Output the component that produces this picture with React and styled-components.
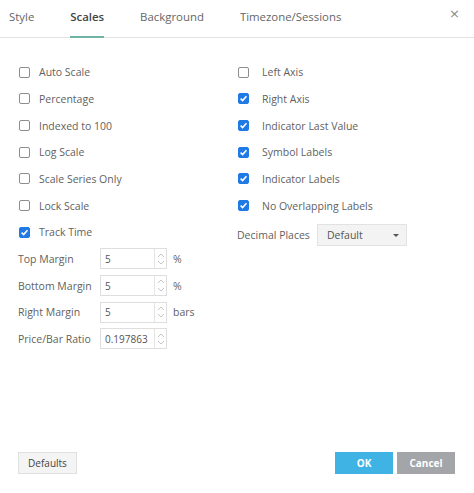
import React from "react";
import styled, { createGlobalStyle } from "styled-components";

const Global = createGlobalStyle`
  html, body { margin: 0; padding: 0; background: #fff; }
  body { font-family: "Open Sans", "Liberation Sans", sans-serif; color: #5f5f5f; }
`;

const leftItems = [
  { label: "Auto Scale", checked: false },
  { label: "Percentage", checked: false },
  { label: "Indexed to 100", checked: false },
  { label: "Log Scale", checked: false },
  { label: "Scale Series Only", checked: false },
  { label: "Lock Scale", checked: false },
  { label: "Track Time", checked: true },
];

const rightItems = [
  { label: "Left Axis", checked: false },
  { label: "Right Axis", checked: true },
  { label: "Indicator Last Value", checked: true },
  { label: "Symbol Labels", checked: true },
  { label: "Indicator Labels", checked: true },
  { label: "No Overlapping Labels", checked: true },
];

const margins = [
  { label: "Top Margin", value: "5", unit: "%" },
  { label: "Bottom Margin", value: "5", unit: "%" },
  { label: "Right Margin", value: "5", unit: "bars" },
  { label: "Price/Bar Ratio", value: "0.197863", unit: "" },
];

function Checkbox({ checked, gap }) {
  return (
    <Box $checked={checked} $gap={gap}>
      {checked && (
        <svg width="9" height="9" viewBox="0 0 10 10">
          <path d="M1.8 5.2 L4 7.3 L8.3 2.5" fill="none" stroke="#fff" strokeWidth="1.8" />
        </svg>
      )}
    </Box>
  );
}

function Spinner() {
  return (
    <Spin>
      <svg width="8" height="5" viewBox="0 0 8 5">
        <path d="M1 4 L4 1 L7 4" fill="none" stroke="#c4c4c4" strokeWidth="1" />
      </svg>
      <svg width="8" height="5" viewBox="0 0 8 5">
        <path d="M1 1 L4 4 L7 1" fill="none" stroke="#c4c4c4" strokeWidth="1" />
      </svg>
    </Spin>
  );
}

export default function App() {
  return (
    <Dialog>
      <Global />
      <Header>
        <Tab>Style</Tab>
        <Tab $active>Scales</Tab>
        <Tab>Background</Tab>
        <Tab>Timezone/Sessions</Tab>
        <Close>×</Close>
      </Header>
      <Body>
        <Column $width="219px">
          {leftItems.map((item) => (
            <Row key={item.label}>
              <Checkbox checked={item.checked} gap="9px" />
              <Label>{item.label}</Label>
            </Row>
          ))}
          {margins.map((m) => (
            <Row key={m.label}>
              <FieldLabel>{m.label}</FieldLabel>
              <Field>
                <Input>{m.value}</Input>
                <Spinner />
              </Field>
              <Unit>{m.unit}</Unit>
            </Row>
          ))}
        </Column>
        <Column>
          {rightItems.map((item) => (
            <Row key={item.label}>
              <Checkbox checked={item.checked} gap="13px" />
              <Label>{item.label}</Label>
            </Row>
          ))}
          <Row $offset="3px">
            <FieldLabel $width="80px">Decimal Places</FieldLabel>
            <Select>
              Default
              <Caret />
            </Select>
          </Row>
        </Column>
      </Body>
      <Footer>
        <Button>Defaults</Button>
        <Spacer />
        <Button $variant="primary">OK</Button>
        <Button $variant="cancel">Cancel</Button>
      </Footer>
    </Dialog>
  );
}

const Dialog = styled.div`
  width: 474px;
  height: 493px;
  display: flex;
  flex-direction: column;
  box-sizing: border-box;
`;

const Header = styled.div`
  height: 38px;
  box-sizing: border-box;
  border-bottom: 1px solid #e3e3e3;
  display: flex;
  align-items: stretch;
  gap: 36px;
  padding: 0 0 0 9px;
  position: relative;
`;

const Tab = styled.div`
  display: flex;
  align-items: center;
  font-size: 11.4px;
  color: ${(p) => (p.$active ? "#444" : "#666")};
  font-weight: ${(p) => (p.$active ? 600 : 400)};
  padding-bottom: 3px;
  box-sizing: border-box;
  border-bottom: 2px solid ${(p) => (p.$active ? "#6fb5a5" : "transparent")};
  margin-bottom: -1px;
`;

const Close = styled.div`
  position: absolute;
  right: 14px;
  top: 6px;
  font-size: 13px;
  color: #8a8a8a;
  font-family: "DejaVu Sans", sans-serif;
`;

const Body = styled.div`
  flex: 1;
  display: flex;
  padding: 21px 18px 0;
`;

const Column = styled.div`
  width: ${(p) => p.$width || "auto"};
  display: flex;
  flex-direction: column;
`;

const Row = styled.div`
  height: 26.67px;
  margin-top: ${(p) => p.$offset || "0"};
  display: flex;
  align-items: center;
`;

const Box = styled.div`
  width: 11px;
  height: 11px;
  flex-shrink: 0;
  box-sizing: border-box;
  border-radius: 2px;
  border: 1px solid ${(p) => (p.$checked ? "#1f7ae6" : "#8d8d8d")};
  background: ${(p) => (p.$checked ? "#1f7ae6" : "#fff")};
  display: flex;
  align-items: center;
  justify-content: center;
  margin-right: ${(p) => p.$gap};
  margin-left: 1px;
`;

const Label = styled.span`
  font-size: 10.5px;
  color: #5f5f5f;
`;

const FieldLabel = styled.span`
  font-size: 10.5px;
  color: #5f5f5f;
  width: ${(p) => p.$width || "82px"};
`;

const Field = styled.div`
  display: flex;
  width: 67px;
  height: 21px;
  box-sizing: border-box;
  border: 1px solid #dedede;
`;

const Input = styled.div`
  flex: 1;
  font-size: 10px;
  color: #555;
  padding-left: 4px;
  display: flex;
  align-items: center;
`;

const Spin = styled.div`
  width: 11px;
  border-left: 1px solid #e6e6e6;
  display: flex;
  flex-direction: column;
  align-items: center;
  justify-content: space-around;
  padding: 2px 0;
`;

const Unit = styled.span`
  font-size: 10.5px;
  color: #5f5f5f;
  margin-left: 6px;
`;

const Select = styled.div`
  width: 90px;
  height: 22px;
  box-sizing: border-box;
  border: 1px solid #e2e2e2;
  background: #f3f3f3;
  font-size: 10.5px;
  color: #555;
  display: flex;
  align-items: center;
  justify-content: space-between;
  padding: 0 7px 0 9px;
`;

const Caret = styled.span`
  width: 0;
  height: 0;
  border-left: 3px solid transparent;
  border-right: 3px solid transparent;
  border-top: 3px solid #555;
`;

const Footer = styled.div`
  display: flex;
  align-items: center;
  gap: 4px;
  padding: 0 19px 19px 18px;
`;

const Spacer = styled.div`
  flex: 1;
`;

const Button = styled.button`
  width: ${(p) => (p.$variant ? "58px" : "59px")};
  height: 22px;
  font-family: "Open Sans", "Liberation Sans", sans-serif;
  font-size: 10px;
  font-weight: ${(p) => (p.$variant ? 700 : 400)};
  border: 1px solid ${(p) => (p.$variant ? "transparent" : "#e0e0e0")};
  background: ${(p) =>
    p.$variant === "primary" ? "#3fb3e3" : p.$variant === "cancel" ? "#a3a5a9" : "#f4f4f4"};
  color: ${(p) => (p.$variant ? "#fff" : "#444")};
  padding: 0;
  cursor: pointer;
`;
